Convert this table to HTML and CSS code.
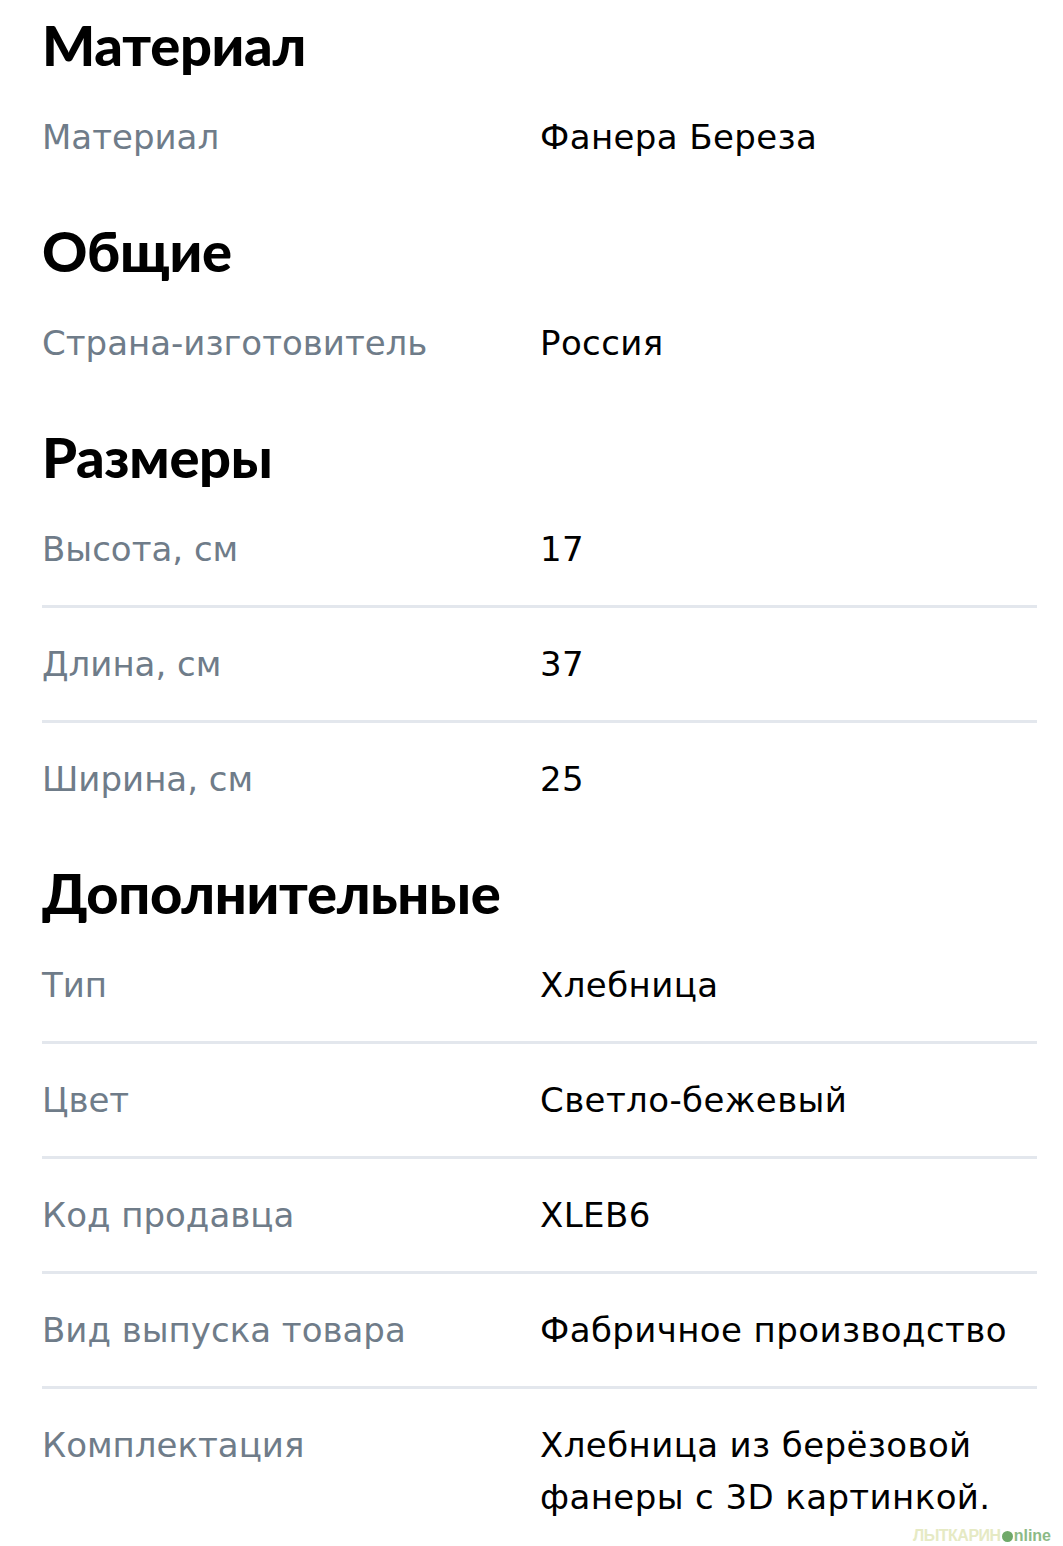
FILE: index.html
```html
<!DOCTYPE html>
<html lang="ru">
<head>
<meta charset="utf-8">
<title>Характеристики</title>
<link rel="stylesheet" href="styles.css">
</head>
<body>
<div class="specs">
  <section class="group">
    <h2 class="group-title">Материал</h2>
    <div class="row"><div class="label">Материал</div><div class="value">Фанера Береза</div></div>
  </section>
  <section class="group">
    <h2 class="group-title">Общие</h2>
    <div class="row"><div class="label">Страна-изготовитель</div><div class="value">Россия</div></div>
  </section>
  <section class="group">
    <h2 class="group-title">Размеры</h2>
    <div class="row"><div class="label">Высота, см</div><div class="value">17</div></div>
    <div class="row"><div class="label">Длина, см</div><div class="value">37</div></div>
    <div class="row"><div class="label">Ширина, см</div><div class="value">25</div></div>
  </section>
  <section class="group">
    <h2 class="group-title">Дополнительные</h2>
    <div class="row"><div class="label">Тип</div><div class="value">Хлебница</div></div>
    <div class="row"><div class="label">Цвет</div><div class="value">Светло-бежевый</div></div>
    <div class="row"><div class="label">Код продавца</div><div class="value">XLEB6</div></div>
    <div class="row"><div class="label">Вид выпуска товара</div><div class="value">Фабричное производство</div></div>
    <div class="row"><div class="label">Комплектация</div><div class="value">Хлебница из берёзовой<br>фанеры с 3D картинкой.</div></div>
  </section>
</div>
<div class="watermark"><span class="wm-city">ЛЫТКАРИН</span><span class="wm-dot"></span><span class="wm-online">nline</span></div>
</body>
</html>
```
FILE: styles.css
```css
html, body {
  margin: 0;
  padding: 0;
  background: #ffffff;
}
body {
  font-family: "DejaVu Sans", "Noto Sans", sans-serif;
  color: #000;
  position: relative;
  min-height: 1546px;
}
.specs {
  padding: 15px 26px 0 42px;
}
.group-title {
  margin: 28px 0 6px;
  font-family: "Lato", "Inter", sans-serif;
  font-weight: 900;
  font-size: 56px;
  line-height: 60px;
  letter-spacing: -0.3px;
}
.group:first-child .group-title {
  margin-top: 0;
}
.row {
  display: grid;
  grid-template-columns: 498px 1fr;
  padding: 30px 0;
  border-bottom: 3px solid #e3e7ed;
  font-size: 34px;
  line-height: 52px;
}
.group .row:last-child {
  border-bottom: none;
}
.label {
  color: #6f7c89;
}
.value {
  color: #000;
  letter-spacing: 0.4px;
}
.watermark {
  position: absolute;
  right: 12px;
  bottom: 8px;
  display: flex;
  align-items: center;
  font-family: "Liberation Sans", sans-serif;
  font-weight: 700;
  font-size: 16px;
  line-height: 18px;
}
.wm-city {
  color: #e6eac4;
  letter-spacing: -0.5px;
}
.wm-dot {
  width: 11px;
  height: 11px;
  border-radius: 50%;
  background: #6fa96a;
  margin: 0 1px;
}
.wm-online {
  color: #8cba86;
}
```
